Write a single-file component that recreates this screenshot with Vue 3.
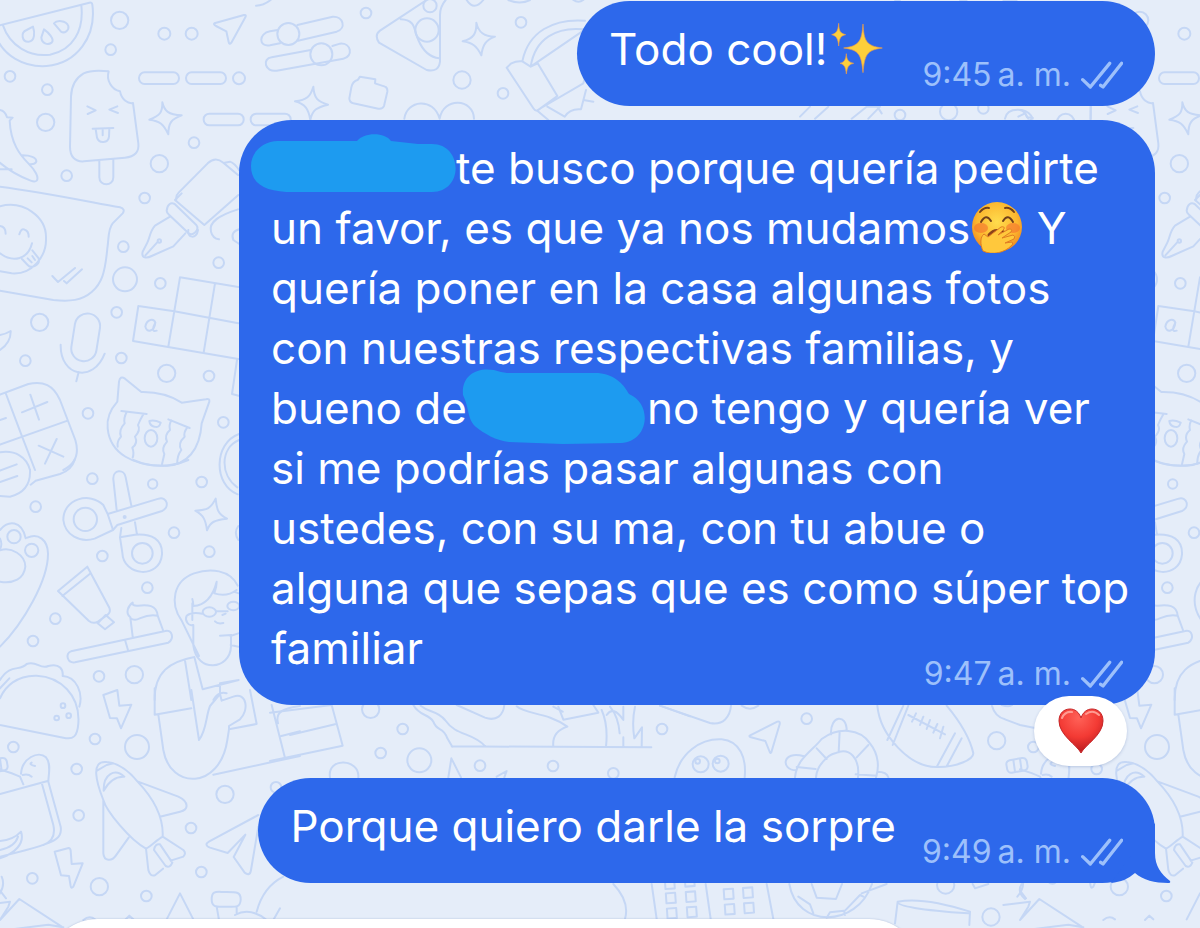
<template>
  <main class="chat">
    <!-- Wallpaper -->
    <svg class="wallpaper" viewBox="0 0 3600 2784" preserveAspectRatio="xMinYMin slice" aria-hidden="true">
      <g id="tile">
        <circle v-for="(dot, i) in tileDots" :key="i" :cx="dot[0]" :cy="dot[1]" :r="dot[2]" />

        <!-- Watermelon, ice cream, pills, stars, pen -->
        <path d="M-8 78L268 8Q276 6 277 14C290 110 230 190 140 198C70 203 10 165 -12 110M8 74C30 140 90 172 150 164C220 150 252 90 244 16" />
        <path d="M99 80C104 95 106 124 86 125C66 126 60 98 80 90ZM132 88C145 97 165 118 155 128C143 137 125 130 124 112ZM162 70C170 60 198 60 205 78C208 92 193 101 183 95Z" />
        <path d="M326 214C300 211 270 211 251 220C225 235 214 260 213 290L210 440C210 470 225 486 252 484L375 473C405 470 418 455 415 430L399 309C385 312 365 300 360 274C335 270 318 240 326 214ZM298 484V532C298 560 340 560 340 532V478" />
        <path d="M262 319L287 331L263 342M352 319L328 329L354 339M278 386L340 384M287 387L291 413C297 432 325 430 327 410L328 386M308 388V406" />
        <rect x="417" y="217" width="120" height="35" rx="17" />
        <rect x="558" y="217" width="120" height="35" rx="17" />
        <rect x="611" y="341" width="120" height="35" rx="17" />
        <rect x="752" y="341" width="120" height="35" rx="17" />
        <path d="M487 307C493 333 505 344 545 346C513 357 505 370 505 403C491 373 480 363 448 359C480 347 488 337 487 307ZM643 70L732 45Q740 43 736 52L694 128Q688 136 686 126L679 94L648 78Q640 73 643 70ZM768 17Q790 17 812 0" />
        <path d="M0 330Q15 332 21 352L38 353L29 362C32 430 60 465 85 490C105 510 118 532 110 542Q105 547 92 542C55 528 18 505 -10 480M68 466C90 466 110 472 109 485Q105 494 90 493M0 508H35" />
        <path d="M0 560C120 575 250 602 360 622Q377 627 368 640L338 670C323 688 327 715 322 745C315 820 305 850 275 876C245 902 210 905 160 900L0 872" />
        <path d="M0 619C70 600 140 650 138 715C140 770 95 825 35 820L0 814M0 678Q17 680 17 701M58 703Q63 684 74 689Q86 692 86 710M0 760C40 790 85 777 96 730M66 777L83 795C95 808 122 794 116 775L97 751M83 775L95 787M97 768L105 780M157 828L174 846L225 804M192 843L200 850L246 808" />
        <path d="M529 600Q526 588 536 578L623 490C640 474 655 475 670 488L714 525M500 632C502 613 512 606 524 612L589 675C600 690 578 710 565 699L507 644Q500 638 500 632ZM545 580L525 600L613 675L715 585M674 488L690 485Q704 490 717 510M510 650L465 677C450 693 449 714 442 728L428 755C423 775 440 776 455 768L520 739L556 700M436 766L471 728" />
        <circle cx="478" cy="723" r="5" />
        <path d="M714 628C660 645 625 665 633 695Q638 715 657 718M718 688Q690 696 700 720L718 732" />

        <!-- Microphone, crossword, cat, calculator -->
        <g transform="translate(0 690)">
          <rect x="219" y="250" width="76" height="144" rx="38" transform="rotate(9 257 322)" />
          <path d="M182 344C180 440 280 460 314 371M236 426L229 454M0 315Q18 312 32 303Q33 337 0 360" />
          <path d="M540 142L715 171M523 244L715 280M415 228L523 244M399 333L715 387M415 228L399 333M540 142L505 350M645 160L611 368M711 390L696 492L716 497M436 290C440 265 462 265 466 278C463 305 440 310 436 290M466 278Q450 308 470 302M565 0C560 24 590 29 594 0" />
          <path d="M424 486L375 446Q360 436 357 455L352 515C330 540 320 570 323 595C330 670 400 710 500 707C560 705 600 660 605 580L628 515Q630 505 618 508L545 518C510 495 470 485 424 486Z" />
          <path d="M364 543L440 552M505 568L569 594M380 546Q370 565 374 580Q355 600 363 620Q350 635 353 650M430 553Q420 570 414 585Q423 600 405 620Q415 640 397 653Q403 670 398 683M514 571Q506 585 510 600Q492 615 501 635Q483 655 493 672L486 703M562 592Q550 608 554 620Q532 640 544 660Q531 677 532 700M448 573Q462 568 482 578Q477 595 463 590Q450 588 448 573Z" />
          <ellipse cx="453" cy="625" rx="19" ry="25" />
          <path d="M0 494L85 462C130 452 160 465 180 510L226 630C238 670 230 700 190 720M18 492L66 619L105 720M0 644L203 572M66 547L142 516M91 494L117 569M116 647L190 680M170 627L135 701M0 570L18 564M0 667C45 660 80 680 90 720M0 722L50 703M717 612C640 640 640 765 713 793M717 630C660 655 660 735 712 772" />
        </g>

        <!-- Scissors, paste, brush, person -->
        <g transform="translate(0 1380)">
          <path d="M107 62L180 42Q215 30 224 0M92 74L107 62M0 66L52 48M90 30Q93 94 30 110L0 108M400 0Q480 35 565 0" />
          <path d="M323 162L476 116C502 109 510 142 486 153L352 195L339 210L284 236C240 250 195 225 190 180C190 115 270 95 310 135ZM323 162L339 210M350 150L340 58C338 28 373 26 377 52L394 137M364 204L360 232L367 278C370 350 480 358 486 283C488 238 455 220 405 224L360 232M405 187L411 224" />
          <circle cx="256" cy="178" r="35" />
          <circle cx="427" cy="280" r="31" />
          <circle cx="374" cy="171" r="3" />
          <path d="M647 116C650 150 655 163 681 176C645 180 631 185 621 211C617 180 611 166 586 152C622 150 633 145 647 116ZM715 198Q700 218 715 240" />
          <path d="M0 210C25 180 65 180 77 235M82 233C115 218 143 240 144 280C145 360 70 490 0 560M0 271C35 260 76 285 76 320C72 357 40 372 0 365M0 236Q8 252 0 268" />
          <circle cx="42" cy="230" r="20" />
          <circle cx="95" cy="271" r="20" />
          <path d="M262 320L174 393L266 482Q280 494 295 484L323 464Q333 457 328 443ZM187 408L272 340M293 490L317 465L342 487L315 508Z" />
          <path d="M398 530L391 472C375 459 384 438 398 428Q396 438 414 437C442 434 470 434 473 467L490 513M391 474C412 492 425 458 473 467M213 574L496 513C515 508 525 534 505 548L225 607C202 610 194 580 213 574ZM376 543L385 574" />
          <path d="M713 377C690 328 630 324 582 340C520 362 508 430 545 482L597 588M577 417Q580 427 580 438C620 435 641 400 650 365Q650 380 643 400Q680 412 710 390M577 430V480M580 495V556C590 640 690 630 693 560V525L660 527M578 495C565 500 553 480 560 467Q575 455 607 461M648 454H683M645 484Q653 493 670 489M667 465L677 461M691 528L715 520M583 591L608 688L716 660M555 602L574 720M583 591C510 605 463 635 464 720M716 400L701 395M692 555L715 560M660 706V670L716 660M640 720Q655 693 680 700" />
          <ellipse cx="628" cy="456" rx="20" ry="14" />
          <ellipse cx="700" cy="438" rx="18" ry="13" />
        </g>

        <!-- Taco, bread, rocket, plane -->
        <g transform="translate(0 2070)">
          <path d="M-84 48Q-75 80 -45 88L0 105L190 143C220 150 232 140 235 100C241 15 180 -40 110 -43C50 -45 15 -10 0 25M0 -30C30 -80 60 -55 80 -78C110 -90 120 -60 145 -72C180 -82 190 -60 188 -42C230 -40 250 10 238 50M0 -5L28 -35M-55 45Q-10 60 -20 15" />
          <circle cx="189" cy="47" r="7" />
          <circle cx="170" cy="84" r="7" />
          <circle cx="206" cy="77" r="7" />
          <path d="M310 15L352 0L358 47L394 44L363 115L351 85L330 84ZM164 485L206 474Q211 474 212 482L215 522L248 520L220 590Q214 597 212 588L207 558L183 556ZM464 74L574 55M464 -5V74M475 74L490 180C510 300 660 300 682 150L687 118L770 102L750 0M574 0L597 150C620 120 617 80 630 48L660 12L665 32L700 20C742 5 747 63 720 88L687 108V120M640 254L900 198M815 45L855 204M834 100C825 65 850 55 900 48M844 138L900 124" />
          <path d="M0 312L143 273M63 251C66 205 115 180 138 202C155 222 145 255 145 275L182 410C188 450 160 462 0 500M125 278L160 405Q170 450 130 465M70 283L61 262M95 218Q85 223 105 228M68 255Q85 251 95 260M0 238Q40 250 60 260M0 453Q40 450 63 425C75 460 45 490 0 505M0 480Q45 470 54 440M-20 210L-15 245M0 207L5 242" />
          <rect x="-40" y="207" width="62" height="38" rx="12" transform="rotate(-10 -9 226)" />
          <path d="M310 330V490C312 514 335 515 348 496L386 443M412 274L535 320C567 335 567 360 540 365L480 380M412 274C480 345 490 400 488 440C470 450 455 467 438 476C390 450 320 365 310 330C290 280 270 210 320 216C350 218 380 235 412 274ZM291 242L320 225L340 220M311 302C310 250 345 235 373 260Q335 258 311 302ZM488 440L550 480Q560 490 550 500L512 512M438 476L445 540Q450 560 465 556L489 536M462 480L497 528Q510 535 517 518L480 463Q465 460 462 480Z" />
          <path d="M775 375L628 454Q610 465 630 473L683 489L736 434L701 501L734 548Q750 560 753 540L775 410M-8 620Q18 590 5 560M0 602L18 625M-50 645L30 635L25 650L0 690L58 627L185 710M-20 725L145 704L190 712M500 688L540 610L580 688M375 690L388 677L400 688M250 690Q268 675 285 688M635 628C635 600 650 606 675 606C710 606 723 605 722 630C720 655 705 650 675 650C650 650 635 653 635 628ZM650 650L657 690M710 650V672M770 665Q790 590 850 560M705 675Q750 650 800 690M820 690L840 655" />
        </g>
      </g>

      <!-- Next column of the same tile -->
      <use href="#tile" x="3060" />

      <g>
        <circle v-for="(dot, i) in middleDots" :key="i" :cx="dot[0]" :cy="dot[1]" :r="dot[2]" />
      </g>

      <g transform="translate(870 0)">
        <path d="M-37 90L-60 94C-95 100 -95 142 -60 136L-30 130M22 75L128 50C160 48 170 85 140 95L24 122M-55 172L62 150M127 138L150 131C185 128 190 170 160 176L-40 212C-75 218 -85 175 -55 172" />
        <circle cx="-5" cy="102" r="33" />
        <circle cx="94" cy="163" r="33" />
        <path d="M410 0L270 92Q252 105 267 128L410 210Q446 218 450 185V45Q450 20 467 0M332 58C380 60 370 90 385 120C400 155 420 172 448 175" />
        <circle cx="411" cy="90" r="35" />
        <circle cx="420" cy="17" r="20" />
        <path d="M559 68C565 95 580 110 615 110C587 120 578 135 574 166C560 137 547 128 518 124C552 115 560 100 559 68ZM70 260C72 295 83 305 114 314C80 322 67 330 61 360C56 328 46 312 15 304C50 300 61 290 70 260ZM184 262Q187 244 204 239L210 230L256 238L255 250L285 260Q293 262 292 275L282 318Q278 328 265 326L190 310Q178 307 178 295ZM343 356C350 300 430 290 449 356C460 290 550 295 552 356M530 0Q552 35 580 0M655 0Q690 15 720 0M850 0Q865 10 880 0" />
        <path d="M650 203L664 190Q680 182 697 184L722 200L743 190L802 288L742 332Q735 333 730 325ZM697 184C715 95 790 55 885 62M722 200C735 115 800 80 880 88M722 200L880 92M743 330L880 250L900 180M742 332L775 360M772 320L824 350Q840 325 873 328L888 270M880 300L910 305" />
      </g>

      <g transform="translate(2400 0)">
        <path d="M0 350L30 320M45 356L85 320M155 356L200 320L240 320L205 356M232 320L245 340M615 356Q620 325 665 330Q690 335 698 356M655 350L675 340L685 356M872 320V356M285 3H300M480 3H500M610 3L650 0" />
      </g>

      <!-- Shore, pig, buoy, ball, football, tower -->
      <g transform="translate(870 2085)">
        <path d="M-60 53L125 30L158 152L-60 198M0 120L135 88M370 30C390 65 415 55 430 80C440 110 460 95 472 130L487 155M392 32C420 55 440 45 465 75C500 125 545 110 586 154M485 154L1084 157M500 30L585 68C620 80 640 60 643 30M680 34C710 60 770 50 832 95Q785 110 790 155M805 35L820 74L925 53L910 30M790 35L818 50M935 45Q955 90 948 155M950 60Q970 30 1000 75V35M1000 127V155M960 35Q985 65 989 115M1035 35Q1025 80 1033 130L1056 97L1055 157M1110 32L1200 64M120 247C110 185 210 190 205 247M475 247L484 190L513 247M620 245L650 228L643 247" />
      </g>
      <g transform="translate(1800 2085)">
        <path d="M180 32L330 84C370 92 390 65 393 32M425 32Q450 50 475 32M224 247C240 175 300 130 365 133C420 138 440 190 434 247M449 122L532 80Q541 77 539 88L514 172Q511 177 508 168L496 138L453 127Q447 125 449 122Z" />
        <circle cx="302" cy="208" r="24" />
        <circle cx="362" cy="206" r="24" />
        <circle cx="293" cy="199" r="7" />
        <circle cx="352" cy="198" r="7" />
        <path d="M585 247C590 190 640 165 665 132C715 95 780 100 810 145C838 180 837 220 828 247M648 247C650 210 685 180 705 175C750 155 780 190 774 247M650 160L680 192M719 110L716 172M770 187L805 150M590 216L647 222M767 238L830 242M693 118C690 60 740 55 740 107M612 184C545 165 542 225 588 226M832 230Q860 230 865 247" />
        <path d="M832 32C840 120 930 220 1015 216C1070 215 1120 195 1120 175C1110 130 1080 80 1040 32M862 135L910 32M878 150L925 32M1010 216L1065 115M1040 214L1085 130M925 60L1035 118M948 55L936 80M970 65L960 90M990 75L980 102M1012 87L1000 113M1030 95L1020 130" />
        <path d="M155 567L170 672M317 567L332 672M500 567L520 672M40 567Q90 620 75 672M568 567C590 700 770 700 816 567M635 567L650 608L708 612L726 567M595 605L630 628L640 655M680 668L690 652L732 647L735 660M735 647L780 600L790 605M785 595L860 567M885 685L893 620Q970 605 1110 650L1108 690M893 620Q890 640 1105 655" />
        <rect v-for="(win, i) in towerWindows" :key="i" :x="win[0]" :y="win[1]" width="28" height="30" transform="rotate(-4 300 600)" />
        <path d="M1118 567L1125 580L1165 567M1265 567Q1250 590 1275 612" />
      </g>
    </svg>

    <article
      v-for="message in messages"
      :key="message.id"
      class="bubble"
      :class="{ 'last': message.last, 'reacted': message.liked }"
    >
      <div v-for="(line, i) in message.lines" :key="i" class="line">
        <p>
          <template v-for="(part, j) in line" :key="j">
            <span v-if="typeof part === 'string'">{{ part }}</span>
            <svg v-else-if="part.icon === 'sparkles'" class="emoji sparkles" viewBox="0 0 156 156" role="img" aria-label="sparkles">
              <path fill="#fdcf3b" stroke="#e99a4e" stroke-width="2" d="M96 6C99 55 104 72 154 78C106 84 101 100 96 152C91 100 86 84 38 78C87 72 92 55 96 6ZM23 4C24 28 28 34 44 38C28 42 25 48 23 72C21 48 16 42 2 38C16 34 21 28 23 4ZM46 95C47 113 51 120 68 124C51 128 49 136 46 156C44 136 41 128 27 124C41 120 44 113 46 95Z" />
            </svg>
            <svg v-else-if="part.icon === 'giggle'" class="emoji" viewBox="0 0 52 52" role="img" aria-label="giggling face">
              <defs>
                <radialGradient id="face" cx="50%" cy="40%" r="62%">
                  <stop offset="0" stop-color="#ffdc4d" />
                  <stop offset="0.65" stop-color="#fcb72f" />
                  <stop offset="1" stop-color="#ee8520" />
                </radialGradient>
              </defs>
              <circle cx="26" cy="26" r="25" fill="url(#face)" />
              <ellipse cx="10" cy="27" rx="7" ry="5" fill="#f4702f" opacity="0.6" />
              <ellipse cx="42" cy="27" rx="7" ry="5" fill="#f4702f" opacity="0.6" />
              <path d="M10 21Q15 12 20 20M32 20Q37 12 42 21M9 11Q13 6 18 7M34 7Q39 6 43 11" fill="none" stroke="#70401b" stroke-width="2" stroke-linecap="round" />
              <path d="M18 34Q24 26 35 32" fill="none" stroke="#8b431a" stroke-width="3" stroke-linecap="round" />
              <path d="M12 50C9 43 9 36 13 33L17 36L30 26Q34 25 33 28L27 34L38 28Q42 28 40 31L31 37L42 34Q45 35 43 38L34 42L41 41Q43 43 40 45C34 51 22 55 12 50Z" fill="#ffc83c" stroke="#df7d23" stroke-width="1" />
            </svg>
            <svg v-else class="scribble" :class="part.icon" :viewBox="part.box" aria-hidden="true">
              <path :d="part.path" />
            </svg>
          </template>
        </p>
        <div v-if="i === message.lines.length - 1" class="meta">
          <time>{{ message.time }}<span>a. m.</span></time>
          <svg class="ticks" viewBox="0 0 126 84" role="img" aria-label="Leído">
            <path d="M5 56L28 78L86 7M59 73L66 78L122 7" />
          </svg>
        </div>
      </div>

      <button v-if="message.liked" class="reaction" type="button" aria-label="Reacción: corazón">
        <svg viewBox="0 0 46 46">
          <defs>
            <radialGradient id="heart" cx="45%" cy="20%" r="80%">
              <stop offset="0" stop-color="#ff6258" />
              <stop offset="0.55" stop-color="#f33a34" />
              <stop offset="1" stop-color="#b7191e" />
            </radialGradient>
          </defs>
          <path d="M23 45C19 37 1 27 1 13C1 5 6 1 12 1C17 1 21 4 23 10C25 4 29 1 34 1C40 1 45 5 45 13C45 27 27 37 23 45Z" fill="url(#heart)" stroke="#c62628" stroke-width="1" />
          <path d="M4 10Q7 3 14 4M28 6Q35 1 41 7" fill="none" stroke="#ff9a91" stroke-width="2" stroke-linecap="round" />
        </svg>
      </button>

      <svg v-if="message.last" class="tail" viewBox="0 0 60 60" aria-hidden="true">
        <path d="M44 0V30C44 43 50 51 59 58Q60 60 57 60C44 60 32 57 24 50C17 56 10 59 0 60Z" />
      </svg>
    </article>

    <article class="bubble-in"></article>
  </main>
</template>

<script setup>
const nameScribble = {
  icon: 'name',
  box: '0 7 205 60',
  path: 'M27 10H106C113 1 134 1 140 10L167 13H181C212 13 213 61 181 61H48C18 62 0 55 0 35C0 21 12 10 27 10Z'
}

const personScribble = {
  icon: 'person',
  box: '0 13 184 60',
  path: 'M0 30C-2 8 18 0 38 7L44 8H132C150 8 160 18 166 29C190 39 186 77 158 78L100 79L46 77C34 76 20 68 13 62C4 54 7 45 0 30Z'
}

const messages = [
  {
    id: 1,
    time: '9:45',
    lines: [['Todo cool!', { icon: 'sparkles' }]]
  },
  {
    id: 2,
    time: '9:47',
    liked: true,
    lines: [
      [nameScribble, 'te busco porque quería pedirte'],
      ['un favor, es que ya nos mudamos', { icon: 'giggle' }, ' Y'],
      ['quería poner en la casa algunas fotos'],
      ['con nuestras respectivas familias, y'],
      ['bueno de', personScribble, 'no tengo y quería ver'],
      ['si me podrías pasar algunas con'],
      ['ustedes, con su ma, con tu abue o'],
      ['alguna que sepas que es como súper top'],
      ['familiar']
    ]
  },
  {
    id: 3,
    time: '9:49',
    last: true,
    lines: [['Porque quiero darle la sorpre']]
  }
]

// x, y, radius
const tileDots = [
  [359, 61, 26], [493, 101, 18], [575, 101, 18], [332, 149, 16], [30, 229, 16], [142, 269, 16],
  [137, 367, 26], [717, 235, 18], [582, 428, 16], [478, 491, 26], [200, 527, 16], [434, 594, 16],
  [370, 740, 16], [656, 788, 16], [375, 838, 36], [481, 850, 16], [119, 967, 26], [350, 937, 16],
  [76, 1082, 16], [364, 1074, 16], [500, 1120, 26], [627, 1128, 16], [264, 1240, 16], [670, 1267, 16],
  [277, 1436, 16], [458, 1452, 14], [605, 1446, 16], [107, 1520, 16], [522, 1598, 16], [307, 1668, 16],
  [628, 1655, 16], [442, 1763, 16], [166, 1856, 16], [99, 1923, 16], [297, 2029, 16], [403, 2024, 26],
  [285, 2217, 16], [40, 2241, 16], [411, 2241, 36], [230, 2307, 16], [675, 2383, 26], [828, 2362, 16],
  [236, 2446, 16], [573, 2484, 16], [604, 2616, 16], [97, 2635, 16], [298, 2660, 26], [439, 2688, 16]
]

const middleDots = [
  [1098, 39, 16], [1563, 67, 16], [1386, 240, 26], [1509, 280, 16], [2700, 345, 16], [2846, 335, 26],
  [2950, 325, 16], [1112, 2128, 26], [1208, 2187, 16], [1142, 2259, 16], [1258, 2281, 36],
  [1440, 2297, 16], [1659, 2298, 16], [1840, 2320, 16], [1986, 2187, 16], [2420, 2156, 16],
  [2990, 2222, 26], [2837, 2655, 26], [2973, 2751, 26]
]

const towerWindows = [
  [198, 545], [258, 542], [198, 588], [258, 588], [198, 634], [258, 634],
  [372, 588], [430, 588], [372, 634], [430, 634]
]
</script>

<style>
body {
  margin: 0;
}
</style>

<style scoped>
.chat {
  position: relative;
  display: flex;
  flex-direction: column;
  align-items: flex-end;
  box-sizing: border-box;
  height: 100vh;
  padding: 1px 45px 0;
  overflow: hidden;
  background: #e5edf9;
  font-family: Inter, "Liberation Sans", sans-serif;
}

.wallpaper {
  position: absolute;
  inset: 0;
  width: 100%;
  height: 100%;
  fill: none;
  stroke: #c5d7f5;
  stroke-width: 6;
  stroke-linecap: round;
  stroke-linejoin: round;
}

.bubble {
  position: relative;
  flex: none;
  box-sizing: border-box;
  max-width: 916px;
  margin-bottom: 14px;
  padding: 18px 32px 27px;
  border-radius: 53px;
  background: #2d68eb;
  color: #fff;
}

.bubble.reacted {
  margin-bottom: 73px;
}

.bubble.last {
  margin-bottom: 36px;
}

.line {
  display: flex;
  align-items: flex-end;
  justify-content: space-between;
  gap: 26px;
  height: 60px;
}

.line p {
  margin: 0;
  font-size: 44px;
  line-height: 60px;
  white-space: pre;
}

.emoji {
  width: 52px;
  height: 52px;
  margin: 0 1px;
  vertical-align: -9px;
}

.emoji.sparkles {
  margin: 0 13px 0 4px;
}

.scribble {
  height: 60px;
  overflow: visible;
  vertical-align: top;
  fill: #1d9bf0;
}

.scribble.name {
  width: 205px;
  margin-left: -20px;
}

.scribble.person {
  width: 184px;
  margin-left: -4px;
}

.meta {
  display: flex;
  align-items: center;
  gap: 10px;
  margin-bottom: -16px;
  color: #9dc0fb;
  font-size: 32px;
  line-height: 40px;
  white-space: nowrap;
}

.meta span {
  margin-left: 6px;
}

.ticks {
  width: 42px;
  height: 28px;
  fill: none;
  stroke: currentColor;
  stroke-width: 10;
  stroke-linecap: round;
  stroke-linejoin: round;
}

.reaction {
  position: absolute;
  right: 28px;
  bottom: -61px;
  display: flex;
  align-items: center;
  justify-content: center;
  width: 93px;
  height: 70px;
  padding: 0;
  border: 0;
  border-radius: 35px;
  background: #fff;
  box-shadow: 0 1px 3px rgba(80, 110, 170, 0.3);
  cursor: pointer;
}

.reaction svg {
  width: 46px;
  height: 46px;
}

.tail {
  position: absolute;
  right: -16px;
  bottom: 0;
  width: 60px;
  height: 60px;
  fill: #2d68eb;
}

.bubble-in {
  position: relative;
  flex: none;
  align-self: flex-start;
  width: 79%;
  height: 106px;
  border-radius: 53px;
  background: #fff;
  box-shadow: 0 0 2px rgba(80, 110, 170, 0.4);
}
</style>
